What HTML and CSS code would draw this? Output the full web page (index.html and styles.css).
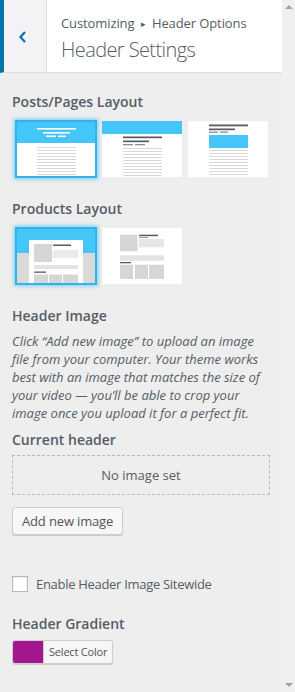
FILE: index.html
```html
<!DOCTYPE html>
<html>
<head>
<meta charset="utf-8">
<link rel="stylesheet" href="styles.css">
</head>
<body>
<div class="frame">
  <main class="panel">
    <header class="head">
      <div class="back">
        <svg width="10" height="14" viewBox="0 0 10 14"><polyline points="7,2 2.5,7 7,12" fill="none" stroke="#0073aa" stroke-width="2.2"/></svg>
      </div>
      <div class="titles">
        <div class="crumb">Customizing <span class="arrow">▸</span> Header Options</div>
        <div class="title">Header Settings</div>
      </div>
    </header>

    <section class="body">
      <div class="label first">Posts/Pages Layout</div>
      <div class="thumbs">
        <div class="thumb sel">
          <svg viewBox="0 0 78 54" preserveAspectRatio="none">
            <rect x="0" y="0" width="78" height="21" fill="#45c6f8"/>
            <rect x="20" y="6" width="39" height="1.6" fill="#fff"/>
            <rect x="26" y="10" width="27" height="1.6" fill="#fff"/>
            <rect x="29" y="13.5" width="10" height="1.6" fill="#fff"/>
            <rect x="41" y="13.5" width="8" height="1.6" fill="#fff"/>
            <g fill="#d8d8d8">
              <rect x="20" y="25" width="39" height="1"/><rect x="20" y="28" width="39" height="1"/>
              <rect x="20" y="31" width="39" height="1"/><rect x="20" y="34" width="39" height="1"/>
              <rect x="20" y="37" width="39" height="1"/><rect x="20" y="40" width="39" height="1"/>
              <rect x="20" y="43" width="39" height="1"/><rect x="20" y="46" width="39" height="1"/>
              <rect x="20" y="49" width="39" height="1"/><rect x="20" y="52" width="39" height="1"/>
            </g>
          </svg>
        </div>
        <div class="thumb">
          <svg viewBox="0 0 80 56" preserveAspectRatio="none">
            <rect x="0" y="0" width="80" height="13" fill="#45c6f8"/>
            <rect x="21" y="15.5" width="39" height="1.7" fill="#555b66"/>
            <rect x="21" y="19.5" width="26" height="1.7" fill="#555b66"/>
            <rect x="21" y="23" width="10" height="1.3" fill="#8a8f96"/>
            <rect x="33" y="23" width="10" height="1.3" fill="#8a8f96"/>
            <g fill="#d8d8d8">
              <rect x="21" y="27" width="39" height="1"/><rect x="21" y="30" width="39" height="1"/>
              <rect x="21" y="33" width="39" height="1"/><rect x="21" y="36" width="39" height="1"/>
              <rect x="21" y="39" width="39" height="1"/><rect x="21" y="42" width="39" height="1"/>
              <rect x="21" y="45" width="39" height="1"/><rect x="21" y="48" width="39" height="1"/>
              <rect x="21" y="51" width="39" height="1"/><rect x="21" y="54" width="39" height="1"/>
            </g>
          </svg>
        </div>
        <div class="thumb">
          <svg viewBox="0 0 80 56" preserveAspectRatio="none">
            <rect x="21" y="3.5" width="39" height="1.8" fill="#555b66"/>
            <rect x="21" y="7.5" width="26" height="1.7" fill="#555b66"/>
            <rect x="21" y="10.5" width="9" height="1.3" fill="#8a8f96"/>
            <rect x="32" y="10.5" width="8" height="1.3" fill="#8a8f96"/>
            <rect x="21" y="14" width="39" height="13" fill="#45c6f8"/>
            <g fill="#d8d8d8">
              <rect x="21" y="29" width="39" height="1"/><rect x="21" y="32" width="39" height="1"/>
              <rect x="21" y="35" width="39" height="1"/><rect x="21" y="38" width="39" height="1"/>
              <rect x="21" y="41" width="39" height="1"/><rect x="21" y="44" width="39" height="1"/>
              <rect x="21" y="47" width="39" height="1"/><rect x="21" y="50" width="39" height="1"/>
              <rect x="21" y="53" width="39" height="1"/>
            </g>
          </svg>
        </div>
      </div>

      <div class="label">Products Layout</div>
      <div class="thumbs">
        <div class="thumb sel">
          <svg viewBox="0 0 78 54" preserveAspectRatio="none">
            <rect x="0" y="0" width="78" height="24" fill="#45c6f8"/>
            <rect x="0" y="24" width="78" height="30" fill="#d9d9d9"/>
            <rect x="12" y="11" width="54" height="43" fill="#fff"/>
            <rect x="17" y="15" width="18" height="18" fill="#d6d6d6"/>
            <rect x="36" y="15.5" width="18" height="1.5" fill="#555b66"/>
            <rect x="36" y="21" width="25" height="8" fill="#ebebeb"/>
            <rect x="17" y="36" width="44" height="4" fill="#e3e3e3"/>
            <rect x="17" y="42.5" width="12" height="1.3" fill="#555b66"/>
            <rect x="17" y="45.5" width="14" height="8.5" fill="#d6d6d6"/>
            <rect x="32" y="45.5" width="13" height="8.5" fill="#d6d6d6"/>
            <rect x="46" y="45.5" width="15" height="8.5" fill="#d6d6d6"/>
          </svg>
        </div>
        <div class="thumb">
          <svg viewBox="0 0 80 56" preserveAspectRatio="none">
            <rect x="18" y="6.7" width="17.5" height="16.6" fill="#d6d6d6"/>
            <rect x="37" y="6.7" width="19" height="1.5" fill="#555b66"/>
            <rect x="37" y="9" width="9" height="1" fill="#9a9ea4"/>
            <rect x="37" y="11" width="25" height="8.3" fill="#e6e6e6"/>
            <rect x="18" y="27.3" width="44" height="5.4" fill="#e3e3e3"/>
            <rect x="18" y="34" width="11" height="1.3" fill="#555b66"/>
            <rect x="18" y="36.7" width="13" height="14.3" fill="#d6d6d6"/>
            <rect x="33" y="36.7" width="13" height="14.3" fill="#d6d6d6"/>
            <rect x="47" y="36.7" width="15" height="14.3" fill="#d6d6d6"/>
          </svg>
        </div>
      </div>

      <div class="label">Header Image</div>
      <p class="desc">Click “Add new image” to upload an image file from your computer. Your theme works best with an image that matches the size of your video — you’ll be able to crop your image once you upload it for a perfect fit.</p>

      <div class="label small-gap">Current header</div>
      <div class="placeholder">No image set</div>
      <button class="btn">Add new image</button>

      <label class="check">
        <span class="box"></span>
        <span class="check-text">Enable Header Image Sitewide</span>
      </label>

      <div class="label">Header Gradient</div>
      <div class="color-btn">
        <span class="swatch"></span>
        <span class="color-text">Select Color</span>
      </div>
    </section>
  </main>
  <aside class="scroll">
    <span class="tri up"></span>
    <span class="tri down"></span>
  </aside>
</div>
</body>
</html>
```

FILE: styles.css
```css
html, body {
  margin: 0;
  padding: 0;
}
body {
  background: #eeeeee;
  font-family: "Open Sans", "Noto Sans", sans-serif;
  color: #555d66;
}
.frame {
  display: flex;
  width: 295px;
  height: 692px;
  overflow: hidden;
}
.panel {
  width: 282px;
  flex: none;
}
.head {
  display: flex;
  height: 72px;
  background: #fff;
  border-bottom: 1px solid #dddddd;
  border-left: 4px solid #0073aa;
  box-sizing: content-box;
}
.back {
  width: 42px;
  flex: none;
  background: #f3f3f5;
  border-right: 1px solid #dddddd;
  display: flex;
  align-items: center;
  justify-content: center;
}
.back svg {
  margin-left: -4px;
  margin-top: 1px;
}
.titles {
  padding: 13px 0 0 14px;
}
.crumb {
  font-size: 13px;
  line-height: 20px;
  color: #555d66;
  letter-spacing: -0.1px;
}
.arrow {
  font-size: 9px;
  vertical-align: 1px;
  margin: 0 3px;
}
.title {
  font-size: 20px;
  font-weight: 300;
  line-height: 28px;
  color: #555d66;
  margin-top: 2px;
  letter-spacing: -0.6px;
}
.body {
  padding: 0 12px;
}
.label {
  font-size: 14px;
  font-weight: 600;
  line-height: 20px;
  color: #555d66;
  margin-top: 21px;
}
.label.first {
  margin-top: 19px;
}
.thumbs {
  display: flex;
  gap: 4px;
  margin-top: 8px;
  padding-left: 3px;
}
.thumb {
  width: 82px;
  height: 58px;
  box-sizing: border-box;
  border: 1px solid transparent;
  background: #fff;
  background-clip: padding-box;
  flex: none;
}
.thumb svg {
  display: block;
  width: 100%;
  height: 100%;
}
.thumb.sel {
  border: 2px solid #2fb3e8;
  box-shadow: 0 0 4px 1px rgba(70, 195, 250, 0.75);
}
.desc {
  margin: 6px 0 0;
  font-size: 13px;
  line-height: 18px;
  font-style: italic;
  color: #555d66;
}
.label.small-gap {
  margin-top: 8px;
}
.placeholder {
  margin-top: 5px;
  height: 40px;
  box-sizing: border-box;
  border: 1px dashed #b4b9be;
  display: flex;
  align-items: center;
  justify-content: center;
  font-size: 13px;
  color: #555d66;
}
.btn {
  display: block;
  margin-top: 12px;
  height: 28px;
  padding: 0 9px;
  font-family: inherit;
  font-size: 13px;
  letter-spacing: -0.15px;
  color: #555;
  background: #f7f7f7;
  border: 1px solid #cccccc;
  border-radius: 3px;
  box-shadow: 0 1px 0 #cccccc;
}
.check {
  display: flex;
  align-items: center;
  margin-top: 40px;
  gap: 8px;
}
.box {
  width: 16px;
  height: 16px;
  box-sizing: border-box;
  border: 1px solid #b4b9be;
  background: #fff;
  box-shadow: inset 0 1px 2px rgba(0,0,0,.07);
}
.check-text {
  font-size: 13px;
  color: #555d66;
  letter-spacing: -0.3px;
}
.color-btn {
  display: inline-flex;
  margin-top: 6px;
  height: 24px;
  box-sizing: border-box;
  border: 1px solid #cccccc;
  border-radius: 3px;
  background: #f7f7f7;
  box-shadow: 0 1px 0 #cccccc;
  overflow: hidden;
}
.swatch {
  width: 30px;
  background: #a3188e;
  border-right: 1px solid #cccccc;
}
.color-text {
  font-size: 11px;
  line-height: 22px;
  padding: 0 5px;
  letter-spacing: -0.2px;
  color: #555;
}
.scroll {
  width: 13px;
  flex: none;
  position: relative;
  background: #f0f0f0;
}
.tri {
  position: absolute;
  left: 3px;
  width: 0;
  height: 0;
  border-left: 4px solid transparent;
  border-right: 4px solid transparent;
}
.tri.up {
  top: 5px;
  border-bottom: 4px solid #a3a3a3;
}
.tri.down {
  bottom: 5px;
  border-top: 4px solid #a3a3a3;
}
```
